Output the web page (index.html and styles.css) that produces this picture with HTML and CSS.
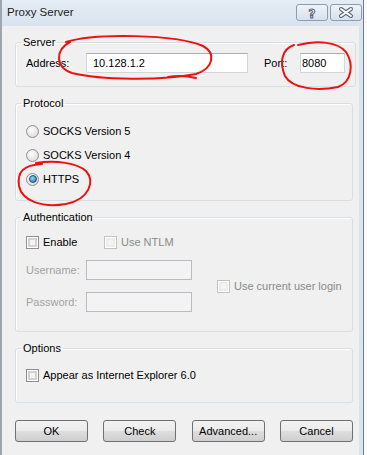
FILE: index.html
```html
<!DOCTYPE html>
<html lang="en">
<head>
  <meta charset="UTF-8" />
  <title>Proxy Server</title>
  <link rel="stylesheet" href="styles.css">
</head>
<body>
  <div class="window">
    <div class="titlebar">
      <span class="title">Proxy Server</span>
      <div class="caption-buttons">
        <span class="cap-btn">
          <svg width="30" height="15" viewBox="0 0 30 15">
            <text x="15" y="12.5" text-anchor="middle" class="help-glyph">?</text>
          </svg>
        </span>
        <span class="cap-btn">
          <svg width="30" height="15" viewBox="0 0 30 15">
            <path d="M10 4 L20 11 M20 4 L10 11" stroke="#5a6779" stroke-width="4" stroke-linecap="round"/>
            <path d="M10 4 L20 11 M20 4 L10 11" stroke="#fff" stroke-width="2" stroke-linecap="round"/>
          </svg>
        </span>
      </div>
    </div>

    <div class="client">
      <fieldset class="group server">
        <legend>Server</legend>
        <div class="server-row">
          <span class="lbl address-lbl">Address:</span>
          <div class="textbox address">10.128.1.2</div>
          <span class="lbl port-lbl">Port:</span>
          <div class="textbox port">8080</div>
        </div>
      </fieldset>

      <fieldset class="group protocol">
        <legend>Protocol</legend>
        <div class="option"><span class="radio"></span>SOCKS Version 5</div>
        <div class="option"><span class="radio"></span>SOCKS Version 4</div>
        <div class="option"><span class="radio checked"></span>HTTPS</div>
      </fieldset>

      <fieldset class="group auth">
        <legend>Authentication</legend>
        <div class="auth-top">
          <div class="option enable"><span class="check"></span>Enable</div>
          <div class="option disabled"><span class="check"></span>Use NTLM</div>
        </div>
        <div class="auth-grid">
          <span class="lbl muted">Username:</span>
          <div class="textbox off"></div>
          <div class="option disabled current"><span class="check"></span>Use current user login</div>
          <span class="lbl muted">Password:</span>
          <div class="textbox off"></div>
        </div>
      </fieldset>

      <fieldset class="group options">
        <legend>Options</legend>
        <div class="option"><span class="check"></span>Appear as Internet Explorer 6.0</div>
      </fieldset>

      <div class="buttons">
        <button type="button">OK</button>
        <button type="button">Check</button>
        <button type="button">Advanced...</button>
        <button type="button">Cancel</button>
      </div>
    </div>

    <svg class="marks" width="364" height="455" viewBox="0 0 364 455">
      <path d="M66 42 C95 33, 175 34, 203 46 C216 53, 214 68, 196 74 C160 81, 100 80, 72 73 C55 67, 55 50, 70 42 M168 77 C178 75, 188 76, 196 78"/>
      <path d="M298 45 C318 40, 338 42, 346 52 C354 64, 352 82, 338 87 C318 91, 292 89, 285 76 C279 62, 282 49, 294 45"/>
      <path d="M36 163 C56 160, 77 163, 86 171 C95 181, 90 199, 66 204 C42 208, 22 201, 19 186 C17 172, 23 165, 42 164"/>
    </svg>
  </div>
</body>
</html>
```

FILE: styles.css
```css
body {
  margin: 0;
  background: #fafafa;
  font-family: "Liberation Sans", Arial, sans-serif;
  font-size: 11px;
  color: #000;
}

.window {
  position: relative;
  width: 361px;
  height: 455px;
  overflow: hidden;
  background: #dae4ef;
  border-left: 2px solid #9ea6b0;
  border-right: 1px solid #6f7c8b;
}

.titlebar {
  height: 26px;
  display: flex;
  align-items: flex-start;
  justify-content: space-between;
  background: linear-gradient(#e4ecf5, #d9e3ee);
}

.title {
  font-size: 11.5px;
  color: #222;
  margin: 6px 0 0 5px;
}

.caption-buttons {
  display: flex;
  gap: 2px;
  margin: 4px 1px 0 0;
}

.cap-btn {
  display: flex;
  width: 30px;
  height: 15px;
  border: 1px solid #8d9bb0;
  border-radius: 3px;
  background: linear-gradient(#eef3f9, #d7e1ec);
}

.help-glyph {
  font-family: "DejaVu Sans", sans-serif;
  font-size: 12px;
  font-weight: bold;
  fill: #fff;
  stroke: #56637a;
  stroke-width: 1;
}

.client {
  height: 426px;
  margin-right: 4px;
  background: #f0f0f0;
  padding: 10px 6px 0 13px;
  display: flex;
  flex-direction: column;
  gap: 10px;
}

.group {
  margin: 0;
  padding: 0 10px;
  border: 1px solid #d5dfe5;
  border-radius: 3px;
  box-shadow: inset 1px 1px 0 #fff;
}

.group legend {
  margin-left: -5px;
  padding: 0 2px;
  line-height: 13px;
}

.server {
  padding-top: 4px;
  padding-bottom: 13px;
}

.server-row {
  display: flex;
  align-items: center;
  height: 20px;
}

.lbl {
  line-height: 20px;
}

.address-lbl {
  width: 60px;
}

.port-lbl {
  margin-left: 16px;
  width: 36px;
}

.textbox {
  box-sizing: border-box;
  height: 20px;
  line-height: 18px;
  background: #fff;
  border: 1px solid #d2d5da;
  border-top-color: #abadb3;
  padding-left: 6px;
}

.textbox.address {
  width: 162px;
}

.textbox.port {
  width: 45px;
  padding-left: 1px;
}

.textbox.off {
  width: 106px;
  background: #f3f3f3;
  border-color: #b9bcc0;
}

.protocol {
  padding-top: 9px;
  padding-bottom: 9px;
}

.option {
  display: flex;
  align-items: center;
  gap: 4px;
  height: 24px;
}

.radio {
  box-sizing: border-box;
  width: 13px;
  height: 13px;
  border: 1px solid #8e8f8f;
  border-radius: 50%;
  background: radial-gradient(circle at 40% 35%, #fdfdfd, #d4d4d4);
  display: flex;
  align-items: center;
  justify-content: center;
}

.radio.checked::after {
  content: "";
  width: 6px;
  height: 6px;
  border-radius: 50%;
  border: 1px solid #1d4f72;
  background: radial-gradient(circle at 40% 35%, #8fd7ff, #1c6fa6);
}

.check {
  box-sizing: border-box;
  width: 13px;
  height: 13px;
  border: 1px solid #8e8f8f;
  background: #f4f4f4;
  box-shadow: inset 0 0 0 1px #fff, inset 0 0 0 3px #d3d3d3;
}

.auth {
  padding-top: 8px;
  padding-bottom: 19px;
}

.auth-top {
  display: flex;
}

.auth-top .option {
  height: 20px;
}

.enable {
  width: 78px;
}

.disabled {
  color: #8a8a8a;
}

.disabled .check {
  border-color: #c2c2c2;
  box-shadow: inset 0 0 0 1px #fff, inset 0 0 0 3px #ececec;
}

.muted {
  color: #a3a3a3;
}

.auth-grid {
  display: grid;
  grid-template-columns: 60px 106px auto;
  grid-template-rows: 20px 20px;
  row-gap: 12px;
  margin-top: 8px;
}

.auth-grid .current {
  grid-column: 3;
  grid-row: 1 / span 2;
  align-self: center;
  margin-left: 25px;
}

.options {
  padding-top: 10px;
  padding-bottom: 17px;
}

.options .option {
  height: 20px;
}

.buttons {
  display: flex;
  justify-content: space-between;
  width: 338px;
  margin-top: 7px;
}

.buttons button {
  width: 73px;
  height: 22px;
  padding: 0;
  border: 1px solid #707070;
  border-radius: 3px;
  background: linear-gradient(#f2f2f2 0%, #ebebeb 50%, #dddddd 51%, #cfcfcf 100%);
  font-family: "Liberation Sans", Arial, sans-serif;
  font-size: 11px;
  color: #000;
}

.marks {
  position: absolute;
  left: -2px;
  top: 0;
  pointer-events: none;
}

.marks path {
  fill: none;
  stroke: #ee1111;
  stroke-width: 2;
  stroke-linecap: round;
}
```
